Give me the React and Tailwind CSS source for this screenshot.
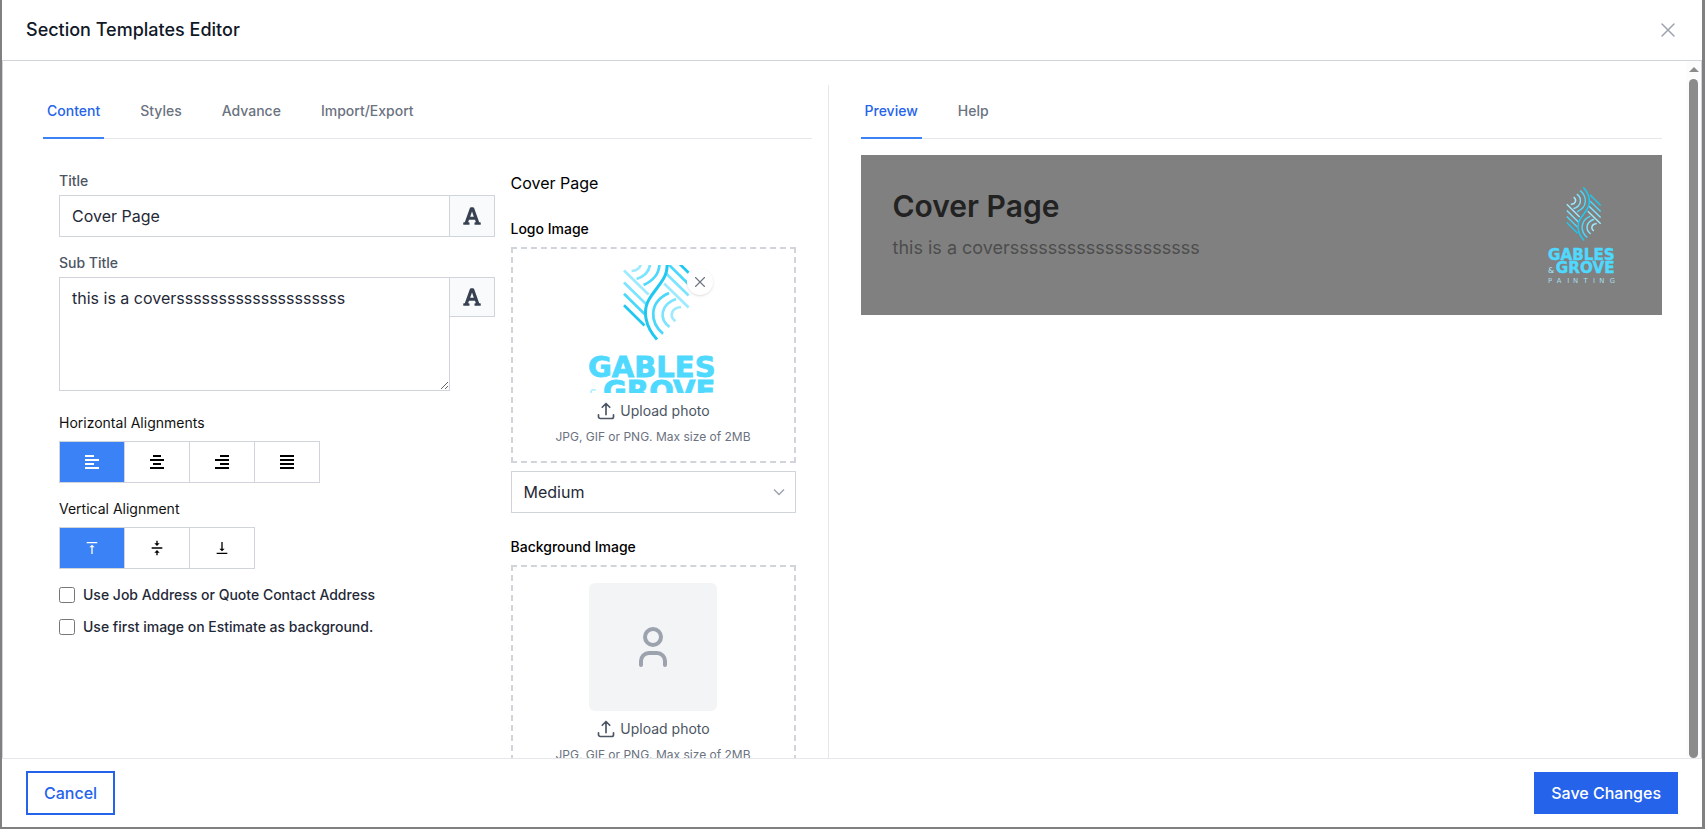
import { FaFont } from "react-icons/fa";

function Logo({ className, fit }) {
  const arcs = (
    <>
      <path d="M35 33 59.5 57" stroke="#9eeaff" />
      <path d="M35 45 57 66.5" stroke="#7ce4ff" />
      <path d="M35 56.3 55.5 76.5" stroke="#4bd8fb" />
      <path d="M35 67.7 55.5 88" stroke="#1fc8f0" />
      <path d="M80 55.5C59 65 61 85 74 96.3" stroke="#4bd8fb" />
      <path d="M87 61.5C71 67 70 82 80.5 89.3" stroke="#7ce4ff" />
      <path d="M92 69.5C82 70.5 80 79 86.5 83.7" stroke="#9eeaff" />
    </>
  );
  return (
    <svg viewBox="0 0 128 183" preserveAspectRatio={fit} className={className} role="img" aria-label="Gables &amp; Grove Painting">
      <g fill="none" strokeWidth="2.7">
        {arcs}
        <g transform="rotate(180 67.3 51.5)">{arcs}</g>
        <path d="M68 102C56 89 53.5 73 60 62C63 57 65 54.5 67.3 51.5C69.6 48.5 71.6 46 74.6 41C81.1 30 78.6 14 66.6 1" stroke="#1fc8f0" strokeWidth="3" />
      </g>
      <g fontFamily="DejaVu Sans, sans-serif" fill="#4fd9ff">
        <text x="-1" y="139" fontSize="29" fontWeight="700" stroke="#4fd9ff" strokeWidth="0.8">GABLES</text>
        <text x="-1" y="163" fontSize="15" fontWeight="400" fill="#a5edff">&amp;</text>
        <text x="14" y="163.5" fontSize="29" fontWeight="700" stroke="#4fd9ff" strokeWidth="0.8">GROVE</text>
        <text x="-1 16 36 47 67 85 97 117" y="182.5" fontSize="13" fontWeight="400" fill="#a5dfec">PAINTING</text>
      </g>
    </svg>
  );
}

function CloseIcon({ className }) {
  return (
    <svg viewBox="0 0 24 24" fill="none" stroke="currentColor" strokeWidth="1.5" strokeLinecap="round" strokeLinejoin="round" className={className} aria-hidden="true">
      <path d="M6 18 18 6M6 6l12 12" />
    </svg>
  );
}

function UploadIcon() {
  return (
    <svg viewBox="0 0 24 24" fill="none" stroke="currentColor" strokeWidth="2" strokeLinecap="round" strokeLinejoin="round" className="size-5" aria-hidden="true">
      <path d="M3 16.5v2.25A2.25 2.25 0 0 0 5.25 21h13.5A2.25 2.25 0 0 0 21 18.75V16.5M7.5 7.5 12 3m0 0 4.5 4.5M12 3v13.5" />
    </svg>
  );
}

function Tabs({ label, items }) {
  return (
    <div role="tablist" aria-label={label} className="flex gap-8 border-b border-gray-200">
      {items.map((item, i) => (
        <button
          key={item}
          type="button"
          role="tab"
          aria-selected={i === 0}
          className={
            i === 0
              ? "-mb-px border-b-2 border-[#3b82f6] px-1 py-4 text-sm font-medium text-[#2563eb]"
              : "-mb-px border-b-2 border-transparent px-1 py-4 text-sm font-medium text-[#6b7280]"
          }
        >
          {item}
        </button>
      ))}
    </div>
  );
}

function FontButton({ label, className }) {
  return (
    <button type="button" aria-label={label} className={`flex w-[45px] shrink-0 items-center justify-center border border-l-0 border-[#d1d5db] bg-[#f9fafb] text-[#374151] ${className}`}>
      <FaFont className="size-5" />
    </button>
  );
}

const horizontal = [
  { name: "Left", bars: [[0, 9], [0, 14], [0, 9], [0, 14]] },
  { name: "Center", bars: [[3, 8], [0, 14], [3, 8], [0, 14]] },
  { name: "Right", bars: [[5, 9], [0, 14], [5, 9], [0, 14]] },
  { name: "Justify", bars: [[0, 14], [0, 14], [0, 14], [0, 14]] },
];

const vertical = [
  { name: "Top", d: "M8 11h3v10h2V11h3l-4-4-4 4zM4 3v2h16V3H4z" },
  { name: "Middle", d: "M8 19h3v4h2v-4h3l-4-4-4 4zm8-14h-3V1h-2v4H8l4 4 4-4zM4 11v2h16v-2H4z" },
  { name: "Bottom", d: "M16 13h-3V3h-2v10H8l4 4 4-4zM4 19v2h16v-2H4z" },
];

function AlignButton({ name, active, first, children }) {
  return (
    <button
      type="button"
      aria-label={name}
      aria-pressed={active}
      className={`flex h-[42px] items-center justify-center border-y border-r border-[#d1d5db] ${first ? "w-[66px] border-l" : "w-[65px]"} ${active ? "bg-[#3b82f6] text-white" : "bg-white text-black"}`}
    >
      {children}
    </button>
  );
}

function UploadBox({ label, children }) {
  return (
    <div className="mt-2 flex flex-col items-center border-2 border-dashed border-[#d1d5db] p-4">
      {children}
      <button type="button" aria-label={`Upload photo for ${label}`} className="mt-2 flex items-center gap-1 text-sm text-[#4b5563]">
        <UploadIcon />
        Upload photo
      </button>
      <p className="mt-2 text-xs text-[#6b7280]">JPG, GIF or PNG. Max size of 2MB</p>
    </div>
  );
}

export default function App() {
  return (
    <div className="h-screen bg-[#808080] pr-[3px] pb-[2px] pl-[2px] font-['Inter',sans-serif] text-base text-black">
      <section role="dialog" aria-label="Section Templates Editor" className="flex h-full flex-col bg-white">
        <header className="flex items-center justify-between border-b border-[#d1d5db] py-4 pr-[22px] pl-6">
          <h1 className="text-lg font-medium text-[#111827]">Section Templates Editor</h1>
          <button type="button" aria-label="Close" className="text-[#9ca3af]">
            <CloseIcon className="size-6" />
          </button>
        </header>

        <div className="flex min-h-0 flex-1 border-x border-[#d1d5db]">
          <main className="grid min-w-0 flex-1 grid-cols-2 gap-8 overflow-y-auto px-6 pt-6 [scrollbar-width:none]">
            <div className="border-r border-gray-200 px-4">
              <Tabs label="Editor" items={["Content", "Styles", "Advance", "Import/Export"]} />

              <div className="grid grid-cols-5 gap-4 px-4 py-8">
                <form className="col-span-3">
                  <label htmlFor="title" className="block text-sm font-medium text-[#4b5563]">Title</label>
                  <div className="mt-1 flex">
                    <input id="title" defaultValue="Cover Page" className="h-[42px] min-w-0 flex-1 border border-[#d1d5db] px-3 text-[#1f2937]" />
                    <FontButton label="Title font" className="h-[42px]" />
                  </div>

                  <label htmlFor="subtitle" className="mt-4 block text-sm font-medium text-[#4b5563]">Sub Title</label>
                  <div className="mt-1 flex items-start">
                    <textarea id="subtitle" rows={4} defaultValue="this is a coverssssssssssssssssssss" className="min-w-0 flex-1 resize border border-[#d1d5db] px-3 py-2 text-[#1f2937]" />
                    <FontButton label="Sub title font" className="h-10" />
                  </div>

                  <p className="mt-[22px] text-sm text-[#111111]">Horizontal Alignments</p>
                  <div role="group" aria-label="Horizontal Alignments" className="mt-2 flex">
                    {horizontal.map((h, i) => (
                      <AlignButton key={h.name} name={h.name} active={i === 0} first={i === 0}>
                        <svg viewBox="0 0 14 14" className="size-3.5" fill="currentColor" aria-hidden="true">
                          {h.bars.map(([x, w], j) => (
                            <rect key={j} x={x} y={j * 4} width={w} height="2" />
                          ))}
                        </svg>
                      </AlignButton>
                    ))}
                  </div>

                  <p className="mt-4 text-sm text-[#111111]">Vertical Alignment</p>
                  <div role="group" aria-label="Vertical Alignment" className="mt-2 flex">
                    {vertical.map((v, i) => (
                      <AlignButton key={v.name} name={v.name} active={i === 0} first={i === 0}>
                        <svg viewBox="0 0 24 24" className="size-4" fill="currentColor" aria-hidden="true">
                          <path d={v.d} />
                        </svg>
                      </AlignButton>
                    ))}
                  </div>

                  <div className="mt-4 flex flex-col gap-3 text-sm font-medium text-[#1f2937]">
                    <label className="flex items-center gap-2">
                      <input type="checkbox" className="size-4" />
                      Use Job Address or Quote Contact Address
                    </label>
                    <label className="flex items-center gap-2">
                      <input type="checkbox" className="size-4" />
                      Use first image on Estimate as background.
                    </label>
                  </div>
                </form>

                <div className="col-span-2">
                  <p>Cover Page</p>
                  <h2 className="mt-6 text-sm font-medium">Logo Image</h2>
                  <UploadBox label="Logo Image">
                    <div className="relative size-32">
                      <Logo fit="xMidYMid slice" className="size-32" />
                      <button type="button" aria-label="Remove logo" className="absolute top-1 right-1 rounded-full bg-white p-1 text-[#6b7280] shadow-sm">
                        <CloseIcon className="size-[18px]" />
                      </button>
                    </div>
                  </UploadBox>

                  <div className="relative mt-2">
                    <select aria-label="Logo size" defaultValue="Medium" className="h-[42px] w-full appearance-none border border-[#d1d5db] bg-white px-3 text-[#1f2937]">
                      <option>Small</option>
                      <option>Medium</option>
                      <option>Large</option>
                    </select>
                    <svg viewBox="0 0 12 8" fill="none" stroke="#9ca3af" strokeWidth="1.4" className="pointer-events-none absolute top-[17px] right-[11px] h-2 w-3" aria-hidden="true">
                      <path d="M1 1.5 6 6.5l5-5" />
                    </svg>
                  </div>

                  <h2 className="mt-6 text-sm font-medium">Background Image</h2>
                  <UploadBox label="Background Image">
                    <div className="flex size-32 items-center justify-center rounded-md bg-[#f3f4f6] text-[#9ca3af]">
                      <svg viewBox="0 0 24 24" fill="none" stroke="currentColor" strokeWidth="2" strokeLinecap="round" className="size-12" aria-hidden="true">
                        <circle cx="12" cy="7" r="4" />
                        <path d="M18 21v-2a4 4 0 0 0-4-4h-4a4 4 0 0 0-4 4v2" />
                      </svg>
                    </div>
                  </UploadBox>
                </div>
              </div>
            </div>

            <div>
              <Tabs label="Side panel" items={["Preview", "Help"]} />
              <article className="mt-4 flex items-start justify-between bg-[#808080] p-8">
                <div>
                  <h2 className="text-3xl leading-[38px] font-semibold text-[#222222]">Cover Page</h2>
                  <p className="mt-2 text-lg leading-[30px] text-[#4d4d4d]">this is a coverssssssssssssssssssss</p>
                </div>
                <Logo fit="xMidYMid meet" className="size-24 shrink-0" />
              </article>
            </div>
          </main>

          <div className="flex w-[15px] shrink-0 flex-col items-center gap-[7px] bg-[#fcfcfc] pt-1.5" aria-hidden="true">
            <svg viewBox="0 0 10 5" className="h-[5px] w-2.5 shrink-0" fill="#8b8b8b">
              <path d="M5 0 10 5H0z" />
            </svg>
            <div className="w-[9px] flex-1 rounded-full bg-[#8b8b8b]" />
          </div>
        </div>

        <footer className="flex items-center justify-between border-t border-gray-200 px-6 py-3">
          <button type="button" className="border-2 border-[#2563eb] bg-white px-4 py-2 font-medium text-[#2563eb]">Cancel</button>
          <button type="button" className="border border-[#2563eb] bg-[#2563eb] px-4 py-2 font-medium text-white">Save Changes</button>
        </footer>
      </section>
    </div>
  );
}
